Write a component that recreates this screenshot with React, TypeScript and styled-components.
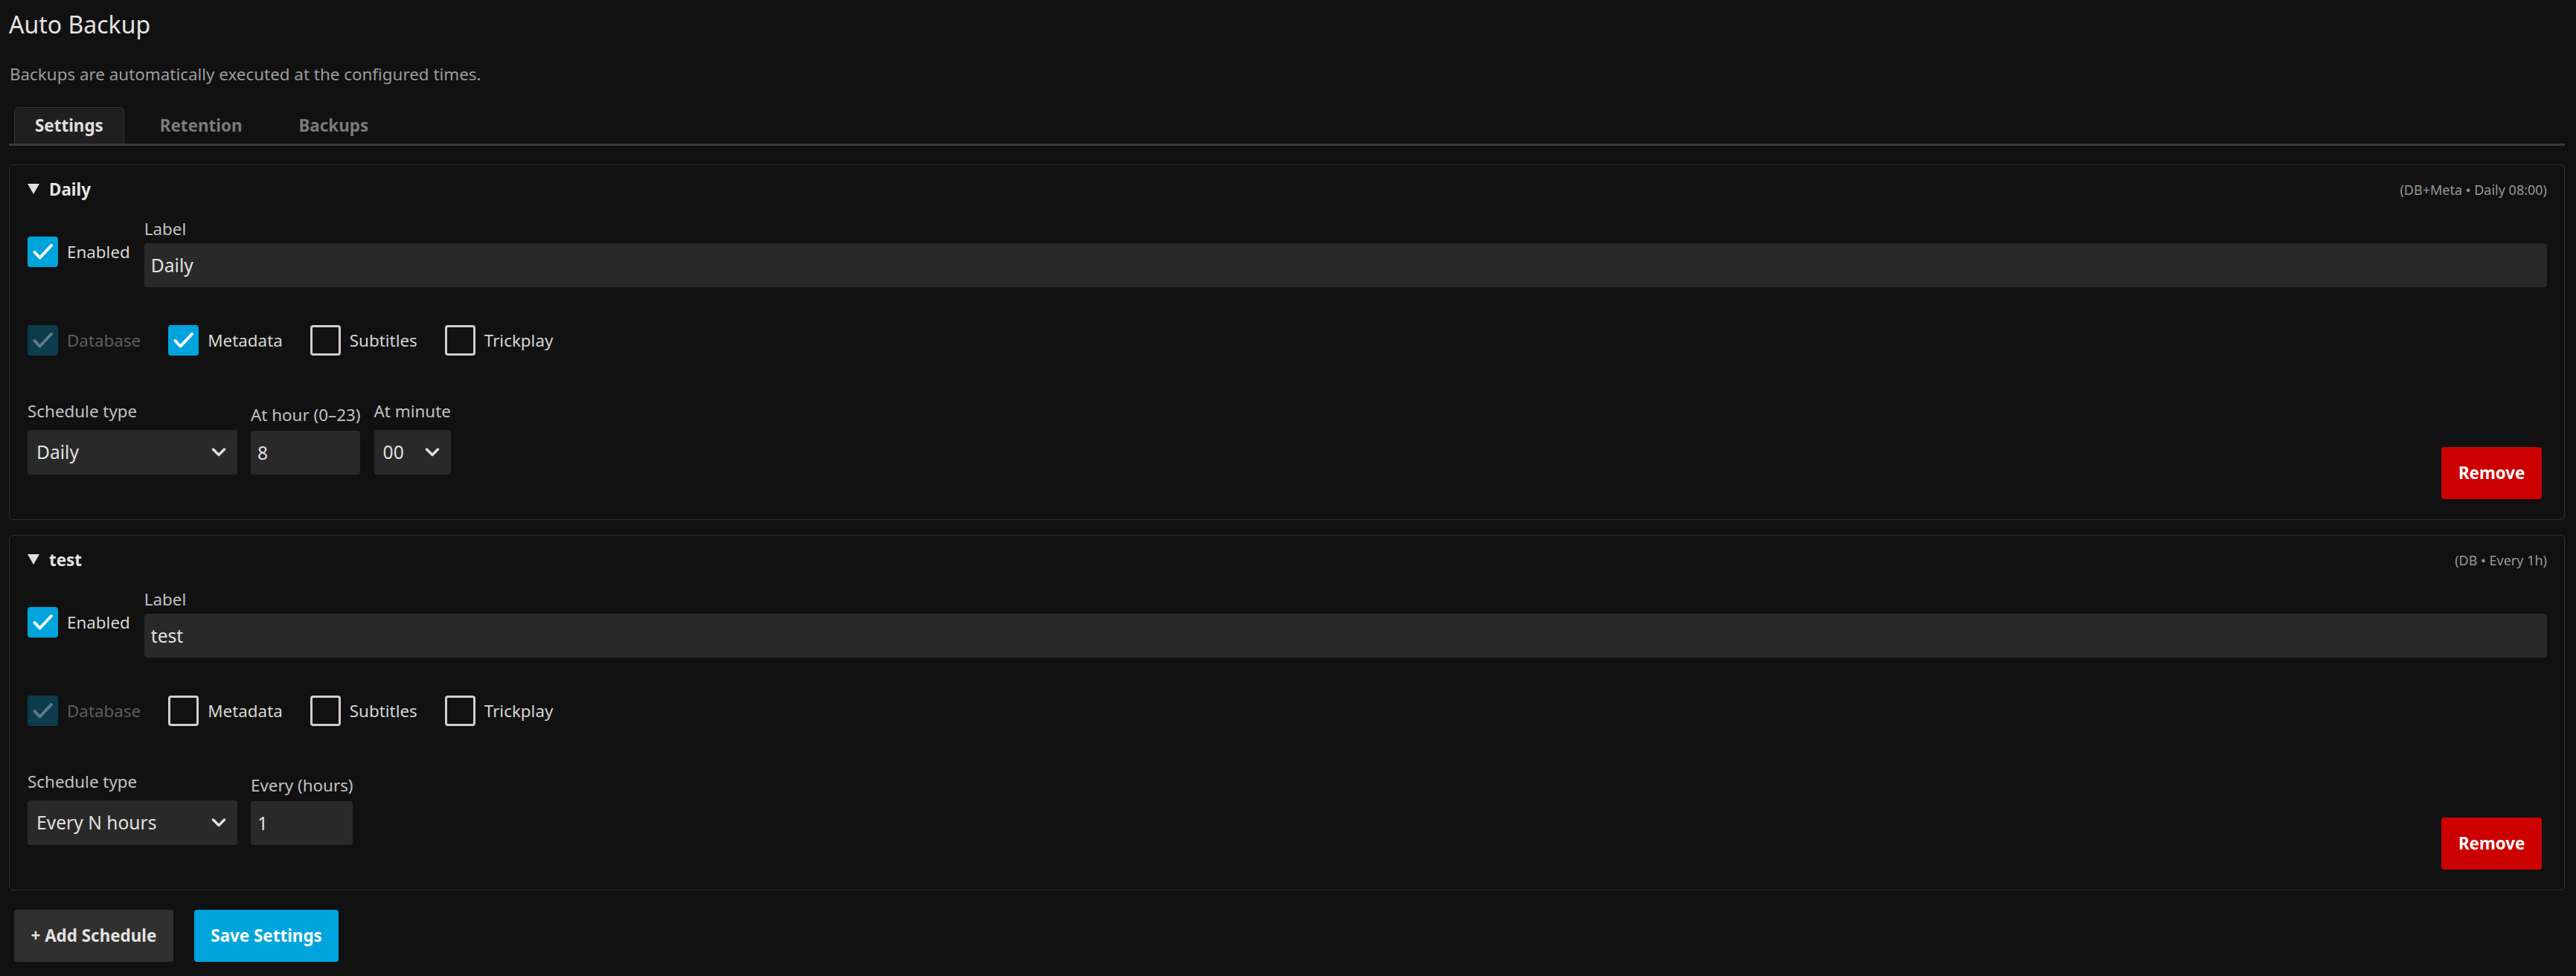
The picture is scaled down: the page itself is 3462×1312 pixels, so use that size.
import React from "react";
import styled, { createGlobalStyle } from "styled-components";

const GlobalStyle = createGlobalStyle`
  html, body {
    margin: 0;
    padding: 0;
    background: #111111;
  }
  body {
    font-family: "Noto Sans", "Open Sans", sans-serif;
    color: #dcdcdc;
  }
  * { box-sizing: border-box; }
`;

const Page = styled.div`
  padding: 14px 15px 22px 12px;
  font-size: 22.4px;
  line-height: 31.4px;
`;

const Title = styled.h1`
  margin: 0;
  font-size: 32px;
  font-weight: 400;
  line-height: 38px;
  color: #e3e3e3;
`;

const Description = styled.p`
  margin: 31.5px 0 0 1px;
  font-size: 22.4px;
  line-height: 31.4px;
  color: #9c9c9c;
`;

const TabList = styled.div`
  display: flex;
  gap: 20px;
  margin-top: 28.6px;
  padding-left: 7px;
  border-bottom: 3px solid #3a3a3a;
`;

const Tab = styled.button<{ $active?: boolean }>`
  font-family: "Noto Sans", "Open Sans", sans-serif;
  font-weight: 700;
  font-size: 22.4px;
  line-height: 31.4px;
  padding: 8px 27px 9px;
  border: 1px solid ${(p) => (p.$active ? "#353535" : "transparent")};
  border-bottom: none;
  border-radius: 6px 6px 0 0;
  background: ${(p) => (p.$active ? "#1f1f1f" : "transparent")};
  color: ${(p) => (p.$active ? "#e0e0e0" : "#7b7b7b")};
  cursor: pointer;
`;

const Cards = styled.div`
  display: flex;
  flex-direction: column;
  gap: 20px;
  margin-top: 25px;
`;

const Card = styled.section`
  border: 1px solid #2f2f2f;
  border-radius: 6px;
  padding: 15.6px 23px 27px 24px;
`;

const SummaryRow = styled.div`
  display: flex;
  align-items: baseline;
  justify-content: space-between;
`;

const SummaryLeft = styled.div`
  display: flex;
  align-items: center;
  gap: 13px;
  align-self: center;
`;

const ScheduleName = styled.span`
  font-weight: 700;
  color: #e4e4e4;
`;

const SummaryInfo = styled.span`
  font-size: 18px;
  color: #989898;
  align-self: center;
  padding-top: 2px;
`;

const MainRow = styled.div`
  display: flex;
  align-items: center;
  gap: 19px;
  margin-top: 20.6px;
`;

const LabelField = styled.div`
  flex: 1;
  display: flex;
  flex-direction: column;
`;

const FieldLabel = styled.label<{ $gap?: number }>`
  display: block;
  color: #c2c2c2;
  margin-bottom: ${(p) => p.$gap ?? 10}px;
  white-space: nowrap;
`;

const TextInput = styled.input<{ $width?: number }>`
  font-family: "Noto Sans", "Open Sans", sans-serif;
  font-size: 24.6px;
  color: #e0e0e0;
  background: #292929;
  border: none;
  border-radius: 4px;
  height: 59px;
  padding: 0 9px;
  width: ${(p) => (p.$width ? `${p.$width}px` : "100%")};
  outline: none;
`;

const CheckRow = styled.div`
  display: flex;
  align-items: center;
  gap: 37px;
  margin-top: 51px;
`;

const CheckLabel = styled.label<{ $disabled?: boolean }>`
  display: flex;
  align-items: center;
  gap: 12px;
  color: ${(p) => (p.$disabled ? "#5e5e5e" : "#d6d6d6")};
  white-space: nowrap;
`;

const Box = styled.span<{ $checked?: boolean; $disabled?: boolean }>`
  width: 41px;
  height: 41px;
  flex: none;
  display: flex;
  align-items: center;
  justify-content: center;
  border-radius: 4px;
  background: ${(p) =>
    p.$checked ? (p.$disabled ? "#0d3c4c" : "#00a4dc") : "transparent"};
  border: ${(p) => (p.$checked ? "none" : "3px solid #cfcfcf")};
`;

const BottomRow = styled.div`
  display: flex;
  align-items: flex-end;
  justify-content: space-between;
  margin-top: 58.6px;
`;

const Fields = styled.div`
  display: flex;
  align-items: flex-end;
  gap: 18px;
  padding-bottom: 33px;
`;

const Field = styled.div`
  display: flex;
  flex-direction: column;
`;

const SelectBox = styled.div<{ $width: number }>`
  width: ${(p) => p.$width}px;
  height: 60px;
  background: #292929;
  border-radius: 4px;
  padding: 0 15px 0 12px;
  display: flex;
  align-items: center;
  justify-content: space-between;
  font-size: 24.6px;
  color: #e0e0e0;
`;

const Button = styled.button<{ $variant: "danger" | "neutral" | "primary" }>`
  font-family: "Noto Sans", "Open Sans", sans-serif;
  font-weight: 700;
  font-size: 22.4px;
  height: 70px;
  padding: 0 22.5px;
  border: none;
  border-radius: 4px;
  cursor: pointer;
  color: ${(p) => (p.$variant === "neutral" ? "#e2e2e2" : "#ffffff")};
  background: ${(p) =>
    p.$variant === "danger"
      ? "#cc0000"
      : p.$variant === "primary"
      ? "#00a4dc"
      : "#303030"};
`;

const RemoveButton = styled(Button)`
  margin-right: 7px;
`;

const Footer = styled.div`
  display: flex;
  gap: 28px;
  margin-top: 26px;
  padding-left: 7px;
`;

const Triangle = () => (
  <svg width="16" height="14" viewBox="0 0 16 14">
    <polygon points="0,0 16,0 8,14" fill="#dedede" />
  </svg>
);

const Chevron = () => (
  <svg width="20" height="12" viewBox="0 0 20 12">
    <polyline
      points="2.5,2 10,9.5 17.5,2"
      fill="none"
      stroke="#e0e0e0"
      strokeWidth="3.4"
      strokeLinecap="round"
      strokeLinejoin="round"
    />
  </svg>
);

const Check = ({ color }: { color: string }) => (
  <svg width="41" height="41" viewBox="0 0 41 41">
    <polyline
      points="9.5,21 16.5,28.5 32,12"
      fill="none"
      stroke={color}
      strokeWidth="4"
      strokeLinecap="round"
      strokeLinejoin="round"
    />
  </svg>
);

const Checkbox = ({
  label,
  checked,
  disabled,
}: {
  label: string;
  checked?: boolean;
  disabled?: boolean;
}) => (
  <CheckLabel $disabled={disabled}>
    <Box $checked={checked} $disabled={disabled}>
      {checked && <Check color={disabled ? "#5f7c86" : "#ffffff"} />}
    </Box>
    {label}
  </CheckLabel>
);

type Schedule = {
  name: string;
  info: string;
  metadata: boolean;
  type: "daily" | "hours";
};

const schedules: Schedule[] = [
  { name: "Daily", info: "(DB+Meta • Daily 08:00)", metadata: true, type: "daily" },
  { name: "test", info: "(DB • Every 1h)", metadata: false, type: "hours" },
];

const ScheduleCard = ({ s }: { s: Schedule }) => (
  <Card>
    <SummaryRow>
      <SummaryLeft>
        <Triangle />
        <ScheduleName>{s.name}</ScheduleName>
      </SummaryLeft>
      <SummaryInfo>{s.info}</SummaryInfo>
    </SummaryRow>
    <MainRow>
      <Checkbox label="Enabled" checked />
      <LabelField>
        <FieldLabel $gap={4}>Label</FieldLabel>
        <TextInput defaultValue={s.name} />
      </LabelField>
    </MainRow>
    <CheckRow>
      <Checkbox label="Database" checked disabled />
      <Checkbox label="Metadata" checked={s.metadata} />
      <Checkbox label="Subtitles" />
      <Checkbox label="Trickplay" />
    </CheckRow>
    <BottomRow>
      <Fields>
        <Field>
          <FieldLabel>Schedule type</FieldLabel>
          <SelectBox $width={282}>
            <span>{s.type === "daily" ? "Daily" : "Every N hours"}</span>
            <Chevron />
          </SelectBox>
        </Field>
        {s.type === "daily" ? (
          <>
            <Field>
              <FieldLabel $gap={6}>At hour (0–23)</FieldLabel>
              <TextInput $width={147} defaultValue="8" />
            </Field>
            <Field>
              <FieldLabel>At minute</FieldLabel>
              <SelectBox $width={103}>
                <span>00</span>
                <Chevron />
              </SelectBox>
            </Field>
          </>
        ) : (
          <Field>
            <FieldLabel $gap={6}>Every (hours)</FieldLabel>
            <TextInput $width={137} defaultValue="1" />
          </Field>
        )}
      </Fields>
      <RemoveButton $variant="danger">Remove</RemoveButton>
    </BottomRow>
  </Card>
);

export default function App() {
  return (
    <>
      <GlobalStyle />
      <Page>
        <Title>Auto Backup</Title>
        <Description>Backups are automatically executed at the configured times.</Description>
        <TabList>
          <Tab $active>Settings</Tab>
          <Tab>Retention</Tab>
          <Tab>Backups</Tab>
        </TabList>
        <Cards>
          {schedules.map((s) => (
            <ScheduleCard key={s.name} s={s} />
          ))}
        </Cards>
        <Footer>
          <Button $variant="neutral">+ Add Schedule</Button>
          <Button $variant="primary">Save Settings</Button>
        </Footer>
      </Page>
    </>
  );
}
